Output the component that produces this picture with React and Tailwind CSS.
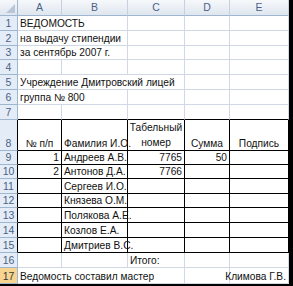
import React from "react";

const COLS = "grid grid-cols-[18px_44px_66px_57px_45px_59px]";
const ROWS =
  "grid-rows-[16px_15px_15px_14px_15px_15px_15px_15px_31px_14px_14px_15px_14px_15px_15px_15px_15px_16px]";

const GRID = "border-[#d0d7e5]";
const BLK = "border-black";

function Cell({ span = 1, text = "", align = "left", border = GRID, children }) {
  const spanCls =
    span === 1 ? "" : span === 2 ? "col-span-2" : span === 3 ? "col-span-3" : "col-span-4";
  const alignCls =
    align === "right" ? "justify-end text-right" : align === "center" ? "justify-center text-center" : "justify-start";
  return (
    <div
      className={`${spanCls} flex items-end ${alignCls} border-r border-b ${border} px-[2px] pb-[0px] whitespace-nowrap overflow-visible text-[10.2px] leading-[13px] text-[#111]`}
    >
      {children || text}
    </div>
  );
}

function RowHead({ n, table, selected }) {
  const bg = selected
    ? "bg-[#f7d48f] text-[#3b3b3b]"
    : "bg-[#e4ecf7] text-[#4a6284]";
  const br = table ? "border-r-black" : "border-r-[#9eb6ce]";
  return (
    <div
      className={`flex items-end justify-center border-r border-b border-b-[#9eb6ce] ${br} ${bg} text-[10.5px] leading-[13px] pb-[0px]`}
    >
      {n}
    </div>
  );
}

function ColHead({ label, last }) {
  return (
    <div
      className={`flex items-center justify-center bg-gradient-to-b from-[#f6f8fb] to-[#dfe6ef] border-b border-[#9eb6ce] ${last ? "border-r-[#d0d7e5]" : "border-r border-r-[#c5d1de]"} text-[10.5px] text-[#4a6284]`}
    >
      {label}
    </div>
  );
}

const names = [
  ["1", "Андреев А.В.", "7765", "50"],
  ["2", "Антонов Д.А.", "7766", ""],
  ["", "Сергеев И.О.", "", ""],
  ["", "Князева О.М.", "", ""],
  ["", "Полякова А.Е.", "", ""],
  ["", "Козлов Е.А.", "", ""],
  ["", "Дмитриев В.С.", "", ""],
];

export default function App() {
  return (
    <div className="w-[293px] h-[286px] bg-black overflow-hidden font-['Liberation_Sans',Arial,sans-serif]">
      <div className={`w-[289px] h-[284px] bg-white ${COLS} ${ROWS}`}>
        {/* header row */}
        <div className="relative bg-gradient-to-b from-[#f6f8fb] to-[#dfe6ef] border-r border-b border-[#9eb6ce]">
          <div className="absolute right-[2px] bottom-[2px] w-0 h-0 border-l-[9px] border-l-transparent border-b-[9px] border-b-[#b8c6d8]" />
        </div>
        <ColHead label="A" />
        <ColHead label="B" />
        <ColHead label="C" />
        <ColHead label="D" />
        <ColHead label="E" />

        {/* 1 */}
        <RowHead n="1" />
        <Cell span={2} text="ВЕДОМОСТЬ" />
        <Cell /><Cell /><Cell />
        {/* 2 */}
        <RowHead n="2" />
        <Cell span={2} text="на выдачу стипендии" />
        <Cell /><Cell /><Cell />
        {/* 3 */}
        <RowHead n="3" />
        <Cell span={2} text="за сентябрь 2007 г." />
        <Cell /><Cell /><Cell />
        {/* 4 */}
        <RowHead n="4" />
        <Cell /><Cell /><Cell /><Cell /><Cell />
        {/* 5 */}
        <RowHead n="5" />
        <Cell span={3} text="Учреждение Дмитровский лицей" />
        <Cell /><Cell />
        {/* 6 */}
        <RowHead n="6" />
        <Cell span={2} text="группа № 800" />
        <Cell /><Cell /><Cell />
        {/* 7 */}
        <RowHead n="7" />
        <Cell border="border-r-[#d0d7e5] border-b-black" />
        <Cell border="border-r-[#d0d7e5] border-b-black" />
        <Cell border="border-r-[#d0d7e5] border-b-black" />
        <Cell border="border-r-[#d0d7e5] border-b-black" />
        <Cell border="border-r-[#d0d7e5] border-b-black" />
        {/* 8 */}
        <RowHead n="8" table />
        <Cell border={BLK} align="center" text="№ п/п" />
        <Cell border={BLK} text="Фамилия И.О." />
        <Cell border={BLK} align="center">
          <div className="flex flex-col items-center leading-[15px]">
            <span>Табельный</span>
            <span>номер</span>
          </div>
        </Cell>
        <Cell border={BLK} align="center" text="Сумма" />
        <Cell border={BLK} align="center" text="Подпись" />
        {/* 9-15 */}
        {names.map((r, i) => (
          <React.Fragment key={i}>
            <RowHead n={String(9 + i)} table />
            <Cell border={BLK} align="right" text={r[0]} />
            <Cell border={BLK} text={r[1]} />
            <Cell border={BLK} align="right" text={r[2]} />
            <Cell border={BLK} align="right" text={r[3]} />
            <Cell border={BLK} />
          </React.Fragment>
        ))}
        {/* 16 */}
        <RowHead n="16" />
        <Cell /><Cell />
        <Cell text="Итого:" />
        <Cell /><Cell />
        {/* 17 */}
        <RowHead n="17" selected />
        <Cell span={3} text="Ведомость составил мастер" />
        <Cell />
        <Cell align="right" text="Климова Г.В." />
      </div>
    </div>
  );
}
